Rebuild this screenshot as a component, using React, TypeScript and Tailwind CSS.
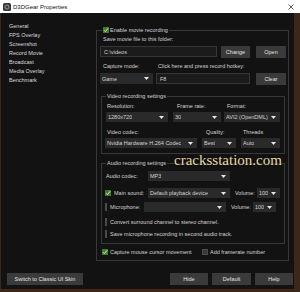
import React from "react";

const NAV = ["General", "FPS Overlay", "Screenshot", "Record Movie", "Broadcast", "Media Overlay", "Benchmark"];

function Arrow() {
  return (
    <svg width="5" height="3" viewBox="0 0 5 3" className="shrink-0">
      <path d="M0 0H5L2.5 3Z" fill="#e8e8e8" />
    </svg>
  );
}

function Select({ value, className }: { value?: string; className: string }) {
  return (
    <div className={`flex h-[10px] items-center justify-between bg-[#2a2a2a] pl-[2px] pr-[4px] ${className}`}>
      <span className="truncate">{value}</span>
      <Arrow />
    </div>
  );
}

function Btn({ label, className }: { label: string; className: string }) {
  return (
    <div className={`flex h-[12px] items-center justify-center bg-[#3a3a3a] text-[#e2e2e2] ${className}`}>
      {label}
    </div>
  );
}

function Check({ on }: { on?: boolean }) {
  if (on)
    return (
      <span className="flex h-[6px] w-[6px] shrink-0 items-center justify-center bg-[#44792f]">
        <svg width="6" height="6" viewBox="0 0 6 6">
          <path d="M1 3.2L2.4 4.6L5.2 1.2" stroke="#d0f5a8" strokeWidth="1" fill="none" />
        </svg>
      </span>
    );
  return <span className="h-[6px] w-[6px] shrink-0 border border-[#4a4a4a] bg-[#3a3a3a]" />;
}

function Legend({ children, className }: { children: React.ReactNode; className: string }) {
  return (
    <div className={`-mt-[5px] flex h-[8px] w-fit items-center bg-[#121212] px-[1px] ${className}`}>
      {children}
    </div>
  );
}

export default function App() {
  return (
    <div className="relative flex h-[292px] w-[300px] flex-col overflow-hidden bg-[#3d2718] font-['Liberation_Sans',Arial,sans-serif] text-[5.5px] leading-[8px] text-[#d2d2d2]">
      {/* title bar */}
      <div className="flex h-[13px] shrink-0 items-center bg-white text-[6px] text-[#111]">
        <svg width="8" height="8" viewBox="0 0 8 8" className="ml-[3px]">
          <rect x="0" y="0" width="8" height="8" rx="1.5" fill="#3a3a3a" />
          <circle cx="4" cy="4" r="2" fill="none" stroke="#9a9a9a" strokeWidth="1" />
        </svg>
        <span className="ml-[2px]">D3DGear Properties</span>
        <svg width="6" height="6" viewBox="0 0 6 6" className="ml-auto mr-[6px]">
          <path d="M0.5 0.5L5.5 5.5M5.5 0.5L0.5 5.5" stroke="#333" strokeWidth="0.8" />
        </svg>
      </div>

      {/* body */}
      <div className="mb-[3px] ml-[1px] mr-[6px] flex flex-1 flex-col bg-[#121212]">
        <div className="flex">
          <nav className="w-[95px] pl-[8px] pt-[9px] text-[#dadada]">
            {NAV.map((n) => (
              <div key={n} className="leading-[9px]">
                {n}
              </div>
            ))}
          </nav>

          <div className="mt-[17px] w-[193px] border border-[#383838] pb-[4px] pl-[3px]">
            <Legend className="ml-[2px] gap-[1px]">
              <Check on />
              <span>Enable movie recording</span>
            </Legend>

            <div className="ml-[3px] mt-[1px]">Save movie file to this folder:</div>
            <div className="mt-[3px] flex items-start">
              <div className="flex h-[11px] w-[117px] items-center border border-[#363636] bg-[#1b1b1b] pl-[3px]">
                C:\videos
              </div>
              <Btn label="Change" className="ml-[4px] w-[29px]" />
              <Btn label="Open" className="ml-[6px] w-[30px]" />
            </div>

            <div className="mt-[4px] flex">
              <span className="ml-[3px] w-[55px]">Capture mode:</span>
              <span>Click here and press record hotkey:</span>
            </div>
            <div className="mt-[3px] flex items-start">
              <Select value="Game" className="h-[11px] w-[53px]" />
              <div className="ml-[3px] flex h-[11px] w-[94px] items-center border border-[#363636] bg-[#1b1b1b] pl-[3px]">
                F8
              </div>
              <Btn label="Clear" className="ml-[6px] w-[30px]" />
            </div>

            {/* video */}
            <div className="ml-[1px] mt-[11px] w-[184px] border border-[#383838] pb-[5px]">
              <Legend className="ml-[4px]">
                <span>Video recording settings</span>
              </Legend>
              <div className="mt-[2px] flex">
                <span className="ml-[5px] w-[70px]">Resolution:</span>
                <span className="w-[50px]">Frame rate:</span>
                <span>Format:</span>
              </div>
              <div className="mt-[2px] flex">
                <Select value="1280x720" className="ml-[4px] w-[62px]" />
                <Select value="30" className="ml-[5px] w-[48px]" />
                <Select value="AVI2 (OpenDML)" className="ml-[3px] w-[56px]" />
              </div>
              <div className="mt-[6px] flex">
                <span className="ml-[5px] w-[99px]">Video codec:</span>
                <span className="w-[37px]">Quality:</span>
                <span>Threads</span>
              </div>
              <div className="mt-[2px] flex">
                <Select value="Nvidia Hardware H.264 Codec" className="ml-[3px] w-[92px]" />
                <Select value="Best" className="ml-[5px] w-[34px]" />
                <Select value="Auto" className="ml-[5px] w-[39px]" />
              </div>
            </div>

            {/* audio */}
            <div className="ml-[1px] mt-[9px] w-[184px] border border-[#383838] pb-[5px]">
              <Legend className="ml-[4px]">
                <span>Audio recording settings</span>
              </Legend>
              <div className="mt-[4px] flex items-center">
                <span className="ml-[4px] w-[42px]">Audio codec:</span>
                <Select value="MP3" className="w-[82px]" />
              </div>
              <div className="mt-[7px] flex items-center">
                <span className="ml-[3px]">
                  <Check on />
                </span>
                <span className="ml-[3px] w-[34px]">Main sound:</span>
                <Select value="Default playback device" className="w-[82px]" />
                <span className="ml-[5px] w-[22px]">Volume:</span>
                <Select value="100" className="w-[23px]" />
              </div>
              <div className="mt-[4px] flex items-center">
                <span className="ml-[3px]">
                  <Check />
                </span>
                <span className="ml-[3px] w-[34px]">Microphone:</span>
                <Select className="w-[82px]" />
                <span className="ml-[5px] w-[22px]">Volume:</span>
                <Select value="100" className="w-[23px]" />
              </div>
              <div className="mt-[6px] flex items-center">
                <span className="ml-[3px]">
                  <Check />
                </span>
                <span className="ml-[3px]">Convert surround channel to stereo channel.</span>
              </div>
              <div className="mt-[4px] flex items-center">
                <span className="ml-[3px]">
                  <Check />
                </span>
                <span className="ml-[3px]">Save microphone recording in second audio track.</span>
              </div>
            </div>

            <div className="mt-[4px] flex items-center">
              <div className="flex w-[102px] items-center">
                <span className="ml-[2px]">
                  <Check on />
                </span>
                <span className="ml-[2px]">Capture mouse cursor movement</span>
              </div>
              <Check />
              <span className="ml-[2px]">Add framerate number</span>
            </div>
          </div>
        </div>

        <div className="mt-[12px] flex items-start">
          <Btn label="Switch to Classic UI Skin" className="ml-[6px] w-[76px]" />
          <Btn label="Hide" className="ml-auto w-[38px]" />
          <Btn label="Default" className="ml-[4px] w-[39px]" />
          <Btn label="Help" className="ml-[4px] mr-[1px] w-[38px]" />
        </div>
      </div>

      {/* watermark */}
      <span className="absolute left-[174px] top-[153px] font-['Liberation_Serif','Times_New_Roman',serif] text-[15px] leading-[15px] text-[#e8dba4] [text-shadow:0_0_2px_#000]">
        cracksstation.com
      </span>
    </div>
  );
}
